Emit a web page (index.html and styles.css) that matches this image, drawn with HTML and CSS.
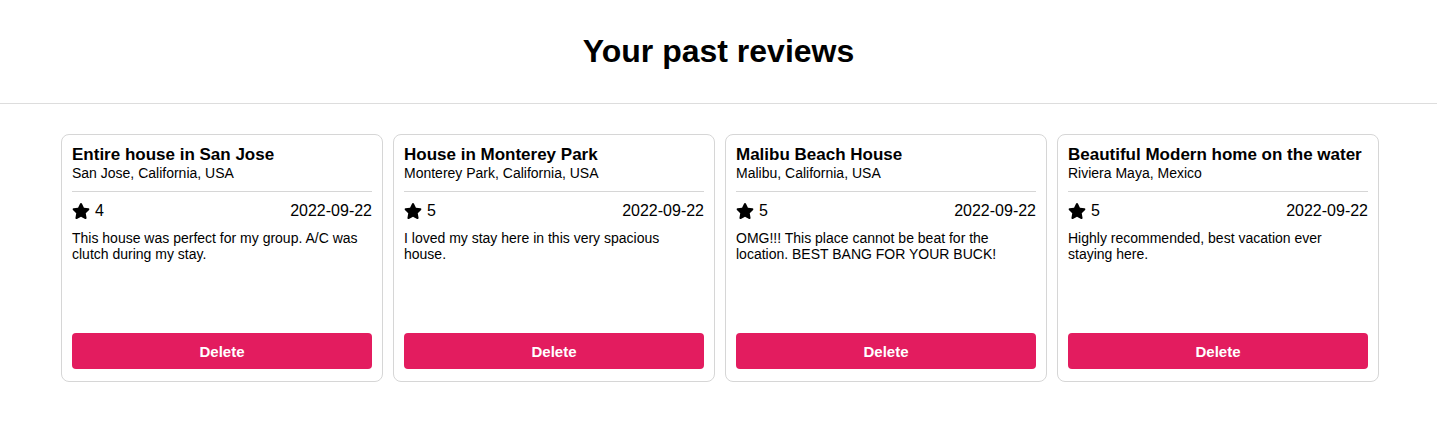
FILE: index.html
```html
<!DOCTYPE html>
<html lang="en">
<head>
<meta charset="utf-8">
<title>Your past reviews</title>
<link rel="stylesheet" href="styles.css">
</head>
<body>
<header class="page-header">
  <h1 class="page-title">Your past reviews</h1>
</header>
<main class="reviews">
  <article class="card">
    <h2 class="card-title">Entire house in San Jose</h2>
    <p class="card-location">San Jose, California, USA</p>
    <hr class="card-divider">
    <div class="card-meta">
      <span class="rating"><svg class="star" viewBox="0 0 576 512"><path d="M259.3 17.8L194 150.2 47.9 171.5c-26.2 3.8-36.7 36.1-17.7 54.6l105.7 103-25 145.5c-4.5 26.3 23.2 46 46.4 33.7L288 439.6l130.7 68.7c23.2 12.2 50.9-7.4 46.4-33.7l-25-145.5 105.7-103c19-18.5 8.5-50.8-17.7-54.6L382 150.2 316.7 17.8c-11.7-23.6-45.6-23.9-57.4 0z"/></svg>4</span>
      <span class="date">2022-09-22</span>
    </div>
    <p class="card-text">This house was perfect for my group. A/C was clutch during my stay.</p>
    <button class="delete-btn">Delete</button>
  </article>
  <article class="card">
    <h2 class="card-title">House in Monterey Park</h2>
    <p class="card-location">Monterey Park, California, USA</p>
    <hr class="card-divider">
    <div class="card-meta">
      <span class="rating"><svg class="star" viewBox="0 0 576 512"><path d="M259.3 17.8L194 150.2 47.9 171.5c-26.2 3.8-36.7 36.1-17.7 54.6l105.7 103-25 145.5c-4.5 26.3 23.2 46 46.4 33.7L288 439.6l130.7 68.7c23.2 12.2 50.9-7.4 46.4-33.7l-25-145.5 105.7-103c19-18.5 8.5-50.8-17.7-54.6L382 150.2 316.7 17.8c-11.7-23.6-45.6-23.9-57.4 0z"/></svg>5</span>
      <span class="date">2022-09-22</span>
    </div>
    <p class="card-text">I loved my stay here in this very spacious house.</p>
    <button class="delete-btn">Delete</button>
  </article>
  <article class="card">
    <h2 class="card-title">Malibu Beach House</h2>
    <p class="card-location">Malibu, California, USA</p>
    <hr class="card-divider">
    <div class="card-meta">
      <span class="rating"><svg class="star" viewBox="0 0 576 512"><path d="M259.3 17.8L194 150.2 47.9 171.5c-26.2 3.8-36.7 36.1-17.7 54.6l105.7 103-25 145.5c-4.5 26.3 23.2 46 46.4 33.7L288 439.6l130.7 68.7c23.2 12.2 50.9-7.4 46.4-33.7l-25-145.5 105.7-103c19-18.5 8.5-50.8-17.7-54.6L382 150.2 316.7 17.8c-11.7-23.6-45.6-23.9-57.4 0z"/></svg>5</span>
      <span class="date">2022-09-22</span>
    </div>
    <p class="card-text">OMG!!! This place cannot be beat for the location. BEST BANG FOR YOUR BUCK!</p>
    <button class="delete-btn">Delete</button>
  </article>
  <article class="card">
    <h2 class="card-title">Beautiful Modern home on the water</h2>
    <p class="card-location">Riviera Maya, Mexico</p>
    <hr class="card-divider">
    <div class="card-meta">
      <span class="rating"><svg class="star" viewBox="0 0 576 512"><path d="M259.3 17.8L194 150.2 47.9 171.5c-26.2 3.8-36.7 36.1-17.7 54.6l105.7 103-25 145.5c-4.5 26.3 23.2 46 46.4 33.7L288 439.6l130.7 68.7c23.2 12.2 50.9-7.4 46.4-33.7l-25-145.5 105.7-103c19-18.5 8.5-50.8-17.7-54.6L382 150.2 316.7 17.8c-11.7-23.6-45.6-23.9-57.4 0z"/></svg>5</span>
      <span class="date">2022-09-22</span>
    </div>
    <p class="card-text">Highly recommended, best vacation ever staying here.</p>
    <button class="delete-btn">Delete</button>
  </article>
</main>
</body>
</html>
```
FILE: styles.css
```css
* { box-sizing: border-box; }
body {
  margin: 0;
  font-family: "Liberation Sans", Arial, sans-serif;
  color: #000;
  background: #fff;
}
.page-header {
  padding: 33px 0 33px;
  border-bottom: 1px solid #dddddd;
  text-align: center;
}
.page-title {
  margin: 0;
  font-size: 32px;
  line-height: 37px;
  font-weight: 700;
}
.reviews {
  display: grid;
  grid-template-columns: repeat(4, 322px);
  gap: 10px;
  margin: 30px 0 0 61px;
}
.card {
  display: flex;
  flex-direction: column;
  height: 248px;
  padding: 10px 10px 12px;
  border: 1px solid #d6d6d6;
  border-radius: 8px;
}
.card-title {
  margin: 0;
  font-size: 17px;
  line-height: 20px;
  font-weight: 700;
  white-space: nowrap;
}
.card-location {
  margin: 0;
  font-size: 14px;
  line-height: 16px;
}
.card-divider {
  width: 100%;
  margin: 10px 0 10px;
  border: 0;
  border-top: 1px solid #d6d6d6;
}
.card-meta {
  display: flex;
  justify-content: space-between;
  align-items: center;
  font-size: 16px;
  line-height: 18px;
}
.rating {
  display: flex;
  align-items: center;
  gap: 5px;
}
.star {
  width: 18px;
  height: 16px;
  fill: #000;
}
.card-text {
  margin: 10px 0 0;
  font-size: 14px;
  line-height: 16px;
}
.delete-btn {
  margin-top: auto;
  height: 36px;
  width: 100%;
  border: 0;
  border-radius: 4px;
  background: #e31c5f;
  color: #fff;
  font-family: inherit;
  font-size: 15px;
  font-weight: 700;
}
```
